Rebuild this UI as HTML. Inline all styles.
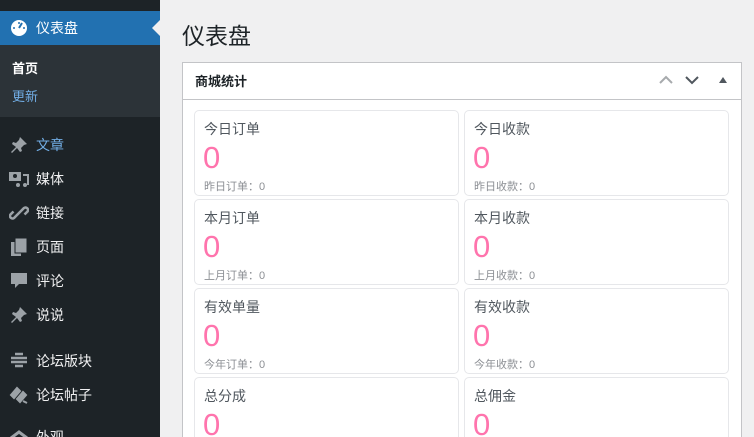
<!DOCTYPE html>
<html><head><meta charset="utf-8"><style>
*{margin:0;padding:0;box-sizing:border-box}
html,body{width:754px;height:437px;overflow:hidden}
body{background:#f0f0f1;font-family:"Liberation Sans","Noto Sans CJK SC",sans-serif;position:relative}
#side{position:absolute;left:0;top:0;width:160px;height:437px;background:#1d2327;overflow:hidden}
.act{position:absolute;top:11px;left:0;width:160px;height:34px;background:#2271b1;color:#fff;font-size:14px;line-height:34px;padding-left:36px}
.act:after{content:"";position:absolute;right:0;top:9px;border:8px solid transparent;border-right-color:#f0f0f1}
.sub{position:absolute;top:45px;left:0;width:160px;height:72px;background:#2c3338;font-size:13px}
.sub div{position:absolute;left:12px}
.mi{position:absolute;left:36px;color:#f0f0f1;font-size:14px;line-height:20px}
.ic{position:absolute;left:9px;width:20px;height:20px}
#title{position:absolute;left:182px;top:17px;font-size:23px;color:#1d2327}
#panel{position:absolute;left:182px;top:62px;width:560px;height:375px;background:#fff;border:1px solid #c3c4c7;border-bottom:none;overflow:hidden}
#ph{height:37px;border-bottom:1px solid #c3c4c7;font-size:13px;font-weight:bold;line-height:37px;padding-left:12px;color:#1d2327}
.card{position:absolute;width:265px;height:86px;border:1px solid #e6e7ea;border-radius:5px;background:#fff}
.card .t{position:absolute;left:9px;top:8px;font-size:14px;color:#50575e}
.card .n{position:absolute;left:8px;top:30px;font-size:31px;color:#ff74ad;line-height:34px}
.card .s{position:absolute;left:9px;top:67px;font-size:11px;color:#8c8f94}
</style></head><body>
<div id="side">
<div class="act">仪表盘</div>
<svg class="ic" style="top:18px" viewBox="0 0 20 20"><circle cx="10" cy="10" r="8" fill="#fff"/><path d="M10 10l3-5" stroke="#2271b1" stroke-width="2"/><circle cx="5" cy="10" r="1" fill="#2271b1"/><circle cx="10" cy="5" r="1" fill="#2271b1"/><circle cx="15" cy="10" r="1" fill="#2271b1"/></svg>
<div class="sub"><div style="top:13px;color:#fff;font-weight:bold">首页</div><div style="top:41px;color:#72aee6">更新</div></div>
<svg class="ic" style="top:135px" viewBox="0 0 20 20"><path d="M11 2l7 7-3 1-3 3 1 3-2 1-3-4-5 5-1-1 5-5-4-3 1-2 3 1 3-3z" fill="#9ca2a7"/></svg><div class="mi" style="top:135px;color:#72aee6">文章</div>
<svg class="ic" style="top:169px" viewBox="0 0 20 20"><rect x="0" y="3" width="12" height="9" fill="#9ca2a7"/><circle cx="6" cy="7" r="2" fill="#1d2327"/><path d="M14 6h5v10" stroke="#9ca2a7" stroke-width="2" fill="none"/><circle cx="16" cy="16" r="2" fill="#9ca2a7"/><circle cx="9" cy="16" r="2" fill="#9ca2a7"/></svg><div class="mi" style="top:169px">媒体</div>
<svg class="ic" style="top:203px" viewBox="0 0 20 20"><path d="M8 12l-3 3a2.5 2.5 0 01-3.5-3.5l3-3M12 8l3-3a2.5 2.5 0 013.5 3.5l-3 3M7 13l6-6" stroke="#9ca2a7" stroke-width="2.5" fill="none"/></svg><div class="mi" style="top:203px">链接</div>
<svg class="ic" style="top:237px" viewBox="0 0 20 20"><rect x="2" y="5" width="10" height="14" fill="#9ca2a7"/><rect x="6" y="1" width="12" height="15" fill="#9ca2a7" stroke="#1d2327"/></svg><div class="mi" style="top:237px">页面</div>
<svg class="ic" style="top:271px" viewBox="0 0 20 20"><path d="M2 2h16v11h-8l-4 4v-4h-4z" fill="#9ca2a7"/></svg><div class="mi" style="top:271px">评论</div>
<svg class="ic" style="top:305px" viewBox="0 0 20 20"><path d="M11 2l7 7-3 1-3 3 1 3-2 1-3-4-5 5-1-1 5-5-4-3 1-2 3 1 3-3z" fill="#9ca2a7"/></svg><div class="mi" style="top:305px">说说</div>
<svg class="ic" style="top:351px" viewBox="0 0 20 20"><path d="M6 3h8M2 7h16M2 11h16M6 15h8" stroke="#9ca2a7" stroke-width="2.5"/></svg><div class="mi" style="top:351px">论坛版块</div>
<svg class="ic" style="top:385px" viewBox="0 0 20 20"><path d="M2 10l6-7 3 3-6 7zM8 14l6-7 3 3-6 7zM14 16l4 2" stroke="#9ca2a7" stroke-width="2" fill="#9ca2a7"/></svg><div class="mi" style="top:385px">论坛帖子</div>
<svg class="ic" style="top:428px" viewBox="0 0 20 20"><path d="M2 10l8-6 8 6" stroke="#9ca2a7" stroke-width="3" fill="none"/></svg><div class="mi" style="top:427px">外观</div>
</div>
<div id="title">仪表盘</div>
<div id="panel"><div id="ph">商城统计</div>
<svg style="position:absolute;left:476px;top:12px" width="14" height="10" viewBox="0 0 14 10"><path d="M1 8l6-6 6 6" stroke="#a7aaad" stroke-width="2" fill="none"/></svg>
<svg style="position:absolute;left:502px;top:12px" width="14" height="10" viewBox="0 0 14 10"><path d="M1 2l6 6 6-6" stroke="#50575e" stroke-width="2" fill="none"/></svg>
<svg style="position:absolute;left:536px;top:14px" width="8" height="6" viewBox="0 0 8 6"><path d="M0 6l4-6 4 6z" fill="#50575e"/></svg>
<div class="card" style="left:11px;top:47px"><div class="t">今日订单</div><div class="n">0</div><div class="s">昨日订单：0</div></div>
<div class="card" style="left:281px;top:47px"><div class="t">今日收款</div><div class="n">0</div><div class="s">昨日收款：0</div></div>
<div class="card" style="left:11px;top:136px"><div class="t">本月订单</div><div class="n">0</div><div class="s">上月订单：0</div></div>
<div class="card" style="left:281px;top:136px"><div class="t">本月收款</div><div class="n">0</div><div class="s">上月收款：0</div></div>
<div class="card" style="left:11px;top:225px"><div class="t">有效单量</div><div class="n">0</div><div class="s">今年订单：0</div></div>
<div class="card" style="left:281px;top:225px"><div class="t">有效收款</div><div class="n">0</div><div class="s">今年收款：0</div></div>
<div class="card" style="left:11px;top:314px"><div class="t">总分成</div><div class="n">0</div></div>
<div class="card" style="left:281px;top:314px"><div class="t">总佣金</div><div class="n">0</div></div>
</div>
</body></html>
